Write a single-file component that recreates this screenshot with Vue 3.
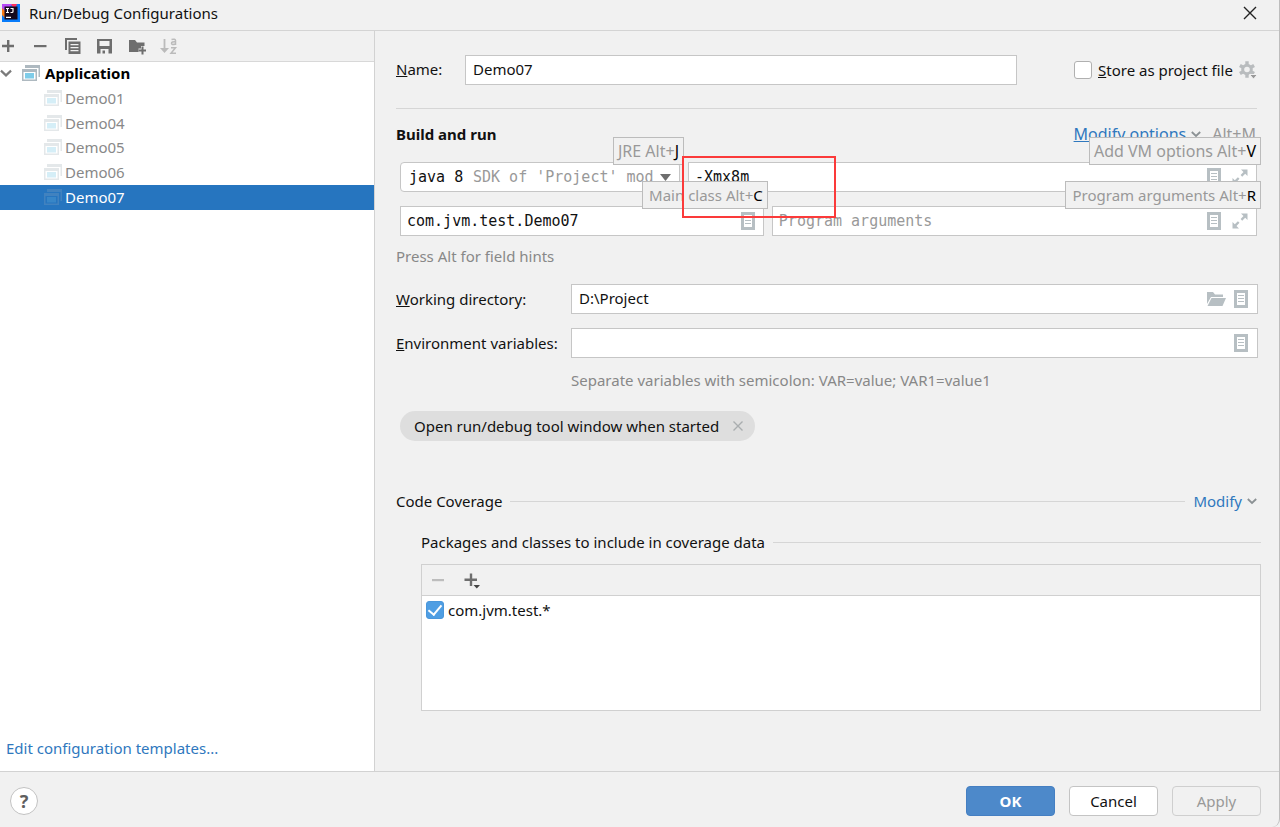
<script setup>
import { ref } from 'vue'

const configs = ['Demo01', 'Demo04', 'Demo05', 'Demo06', 'Demo07']
const selected = ref('Demo07')
const name = ref('Demo07')
const vmOptions = ref('-Xmx8m')
const mainClass = ref('com.jvm.test.Demo07')
const programArgs = ref('')
const workDir = ref('D:\\Project')
const envVars = ref('')
const store = ref(false)
const included = ref(true)
</script>

<template>
  <svg class="defs" aria-hidden="true">
    <symbol id="icon-doc" viewBox="0 0 16 18">
      <path fill="currentColor" fill-rule="evenodd" d="M1 0h14v18H1zM4 3v12h8V3z" />
      <path fill="currentColor" d="M5 5h6v1H5zM5 8h6v1H5zM5 11h6v1H5z" />
    </symbol>
    <symbol id="icon-expand" viewBox="0 0 16 16">
      <path fill="currentColor" d="M9 0.500h6.500V7L13.200 4.700 10.200 7.700 8.600 6.100 11.500 3.100zM.500 9l2.300 2.300L5.900 8.200 7.500 9.800 4.500 12.900 7 15.500H.500z" />
    </symbol>
    <symbol id="icon-app" viewBox="0 0 18 18">
      <path fill="#aeb9c0" d="M3 1h15v12h-1.500V4H3z" />
      <path fill="var(--pane)" d="M1 7h13v9H1z" />
      <path fill="#aeb9c0" fill-rule="evenodd" d="M0 5h15v12H0zM1.500 8v7.500h12V8z" />
      <path fill="#7fcce8" d="M3 9h9v5.500H3z" />
    </symbol>
    <symbol id="icon-chev" viewBox="0 0 10 10">
      <path fill="none" stroke="currentColor" stroke-width="1.800" d="M.8 3 5 7l4.200-4" />
    </symbol>
  </svg>
  <div class="dialog">
    <header class="titlebar">
      <svg class="logo" viewBox="0 0 18 18" aria-hidden="true">
        <path fill="#087cfa" d="M0 0h18v18H0z" />
        <path fill="#fe315d" d="M8 0h7l-2 5z" />
        <path fill="#f97a12" d="M0 3l5 2-2 9-3-3z" />
        <path fill="#b74af7" d="M0 0h10L4 8 0 4z" />
        <path fill="#150a1c" d="M2.500 2.500h13v13h-13z" />
        <path fill="none" stroke="#fff" stroke-width="1.200" d="M4 4.500h3M5.500 4.500v4M4 8.500h3M8.500 4.500H11v3q0 1-1 1H8.500M4 13.300h5" />
      </svg>
      <h1>Run/Debug Configurations</h1>
      <button class="plain close" aria-label="Close">
        <svg width="14" height="14" viewBox="0 0 14 14"><path d="M1 1l12 12M13 1 1 13" stroke="#222" stroke-width="1.400" /></svg>
      </button>
    </header>

    <div class="body">
      <aside class="side">
        <div class="tools">
          <button class="plain" aria-label="Add"><svg viewBox="0 0 18 18"><path fill="#6e6e6e" d="M7 3h2.400v4.800H14v2.400H9.400V15H7v-4.800H2V7.800h5z" /></svg></button>
          <button class="plain" aria-label="Remove"><svg viewBox="0 0 18 18"><path fill="#6e6e6e" d="M2 8h12.500v2.200H2z" /></svg></button>
          <button class="plain" aria-label="Copy"><svg viewBox="0 0 18 18"><path fill="#6e6e6e" d="M1 1h12v2H3v10H1z" /><path fill="#6e6e6e" fill-rule="evenodd" d="M4.500 4.500h12V17h-12zM6.500 7v1.200h8V7zM6.500 10v1.200h8V10zM6.500 13v1.200h8V13z" /></svg></button>
          <button class="plain" aria-label="Save"><svg viewBox="0 0 18 18"><path fill="#6e6e6e" fill-rule="evenodd" d="M1 2h15v14.500H1zM3.500 4v5h10V4zM4.500 12v4.500h8V12z" /><path fill="#6e6e6e" d="M6.500 13.500H9v3H6.500z" /></svg></button>
          <button class="plain" aria-label="New folder"><svg viewBox="0 0 18 18"><path fill="#6e6e6e" d="M1 3h6l2 2.500h7.500V9H13v2.500h-2.500V15H1z" /><path fill="#6e6e6e" d="M13.500 9.500h2v3h3v2h-3v3h-2v-3h-3v-2h3z" /></svg></button>
          <button class="plain sort" aria-label="Sort"><svg viewBox="0 0 18 18"><path fill="none" stroke="#bbb" stroke-width="1.800" d="M4.500 2v12" /><path fill="#bbb" d="M0 11h9l-4.500 5z" /><path fill="none" stroke="#bbb" stroke-width="1.500" d="M11.500 2.600q4-1 4 1V8M15.500 4.800q-4-.3-4 1.500 0 2 4 .7M11 10.800h4.500l-4.500 5.500h5" /></svg></button>
        </div>
        <ul class="tree">
          <li class="root">
            <svg class="twist" width="12" height="12"><use href="#icon-chev" /></svg>
            <svg class="appicon"><use href="#icon-app" /></svg>
            <span>Application</span>
          </li>
          <li v-for="c in configs" :key="c" :class="{ on: c === selected }" @click="selected = c">
            <svg class="appicon"><use href="#icon-app" /></svg>
            <span>{{ c }}</span>
          </li>
        </ul>
        <a class="link edit" href="#">Edit configuration templates...</a>
      </aside>

      <main class="main">
        <div class="namerow">
          <label class="namelabel" for="name"><u>N</u>ame:</label>
          <div class="field"><input id="name" v-model="name" type="text" /></div>
          <div class="store">
            <input id="store" v-model="store" class="check" type="checkbox" />
            <label for="store"><u>S</u>tore as project file</label>
            <svg class="gear" viewBox="0 0 18 18" aria-hidden="true">
              <path fill="none" stroke="#b9bcbe" stroke-width="3" d="M8 4.200a4.300 4.300 0 1 1 0 8.600 4.300 4.300 0 1 1 0-8.600z" />
              <path stroke="#b9bcbe" stroke-width="3.400" d="M8 .3v3.200M8 13.500v3.200M.9 4.400l2.800 1.600M12.300 11l2.800 1.600M.9 12.600 3.700 11M12.300 6l2.800-1.600" />
              <path fill="#999" stroke="#f2f2f2" d="M10.500 13.500h8L14.500 18z" />
            </svg>
          </div>
        </div>

        <hr class="rule" />

        <div class="buildhead">
          <h2>Build and run</h2>
          <a class="link" href="#"><u>Modify options</u></a>
          <svg class="chev" width="10" height="10"><use href="#icon-chev" /></svg>
          <span class="muted">Alt+M</span>
        </div>

        <div class="fields">
          <div class="row first">
            <div class="field mono jre">
              <select aria-label="JRE"><option>java 8</option></select>
              <span class="sdk">SDK of 'Project' mod</span>
              <svg class="arrow" viewBox="0 0 11 7" aria-hidden="true"><path fill="#6e6e6e" d="M0 0h11L5.500 7z" /></svg>
              <div class="tip">JRE Alt+<b>J</b></div>
            </div>
            <div class="field mono">
              <input v-model="vmOptions" type="text" aria-label="VM options" />
              <svg class="doc"><use href="#icon-doc" /></svg>
              <svg class="exp"><use href="#icon-expand" /></svg>
              <div class="tip">Add VM options Alt+<b>V</b></div>
            </div>
          </div>
          <div class="row second">
            <div class="field mono">
              <input v-model="mainClass" type="text" aria-label="Main class" />
              <svg class="doc"><use href="#icon-doc" /></svg>
              <div class="tip">Main class Alt+<b>C</b></div>
            </div>
            <div class="field mono">
              <input v-model="programArgs" type="text" placeholder="Program arguments" aria-label="Program arguments" />
              <svg class="doc"><use href="#icon-doc" /></svg>
              <svg class="exp"><use href="#icon-expand" /></svg>
              <div class="tip">Program arguments Alt+<b>R</b></div>
            </div>
          </div>
          <div class="mark"></div>
        </div>
        <p class="hint">Press Alt for field hints</p>

        <div class="form">
          <label for="wd"><u>W</u>orking directory:</label>
          <div class="field">
            <input id="wd" v-model="workDir" type="text" />
            <svg class="folder" viewBox="0 0 20 16" aria-hidden="true"><path fill="#b7bfc3" d="M1 1h6l2 2.500h8V6H5L1 13z" /><path fill="#b7bfc3" d="M5.500 7H20l-3.500 8H1.500z" /></svg>
            <svg class="doc"><use href="#icon-doc" /></svg>
          </div>
          <label for="env"><u>E</u>nvironment variables:</label>
          <div class="field">
            <input id="env" v-model="envVars" type="text" />
            <svg class="doc"><use href="#icon-doc" /></svg>
          </div>
        </div>
        <p class="hint envhint">Separate variables with semicolon: VAR=value; VAR1=value1</p>

        <div class="chip">
          <span>Open run/debug tool window when started</span>
          <button class="plain" aria-label="Remove option"><svg width="10" height="10" viewBox="0 0 10 10"><path d="M.5.5l9 9M9.500.5l-9 9" stroke="#a9adaf" stroke-width="1.400" /></svg></button>
        </div>

        <div class="section coverage">
          <h3>Code Coverage</h3>
          <span class="line"></span>
          <a class="link" href="#">Modify</a>
          <svg class="chev" width="10" height="10"><use href="#icon-chev" /></svg>
        </div>

        <div class="section packages">
          <h3>Packages and classes to include in coverage data</h3>
          <span class="line"></span>
        </div>
        <div class="list">
          <div class="listtools">
            <button class="plain" aria-label="Remove package" disabled><svg viewBox="0 0 18 18"><path fill="#bdbdbd" d="M3 8h12v2.200H3z" /></svg></button>
            <button class="plain" aria-label="Add package"><svg viewBox="0 0 18 18"><path fill="#6e6e6e" d="M7.800 2.500h2.400v5.100H15v2.400h-4.800v5H7.800v-5H2.500V7.600h5.300z" /><path fill="#444" d="M11.500 14H18l-3.200 3.500z" /></svg></button>
          </div>
          <div class="item">
            <input id="pkg" v-model="included" class="check" type="checkbox" />
            <label for="pkg">com.jvm.test.*</label>
          </div>
        </div>
      </main>
    </div>

    <footer class="footer">
      <button class="help" aria-label="Help">?</button>
      <button class="btn ok">OK</button>
      <button class="btn">Cancel</button>
      <button class="btn" disabled>Apply</button>
    </footer>
  </div>
</template>

<style>
body {
  background: #f1f1f1;
}
</style>

<style scoped>
* {
  box-sizing: border-box;
}
.defs {
  position: absolute;
  width: 0;
  height: 0;
}
.dialog {
  display: flex;
  flex-direction: column;
  min-height: 100vh;
  background: #f1f1f1;
  border-right: 1px solid #bdbdbd;
  border-radius: 0 0 8px 0;
  font: 15px/24px "Noto Sans", "Open Sans", sans-serif;
  color: #111;
}
h1, h2, h3, p, ul {
  margin: 0;
  padding: 0;
  font-size: inherit;
  font-weight: 400;
}
svg {
  display: block;
  flex: none;
}
input, select, button {
  font: inherit;
  color: inherit;
}
.plain {
  padding: 0;
  border: 0;
  background: none;
}
.link {
  color: #2f78be;
  text-decoration: none;
}
.titlebar {
  display: flex;
  align-items: center;
  height: 31px;
  padding: 0 22px 4px 2px;
  border-bottom: 1px solid #d4d4d4;
}
.logo {
  width: 18px;
  height: 18px;
  margin-right: 9px;
}
.close {
  margin-left: auto;
}
.body {
  display: flex;
  flex: 1;
}
.side {
  display: flex;
  flex-direction: column;
  flex: none;
  width: 375px;
  background: #fff;
  border-right: 1px solid #d2d2d2;
}
.tools {
  display: flex;
  align-items: center;
  gap: 14px;
  height: 31px;
  background: #f1f1f1;
  border-bottom: 1px solid #d8d8d8;
}
.tools svg, .listtools svg {
  width: 18px;
  height: 18px;
}
.tree {
  display: grid;
  grid-template-rows: repeat(6, 1fr);
  height: 148px;
  list-style: none;
  color: #888;
}
.tree li {
  display: flex;
  align-items: center;
  gap: 3px;
  min-height: 0;
  padding: 0 0 2px 44px;
}
.tree .root {
  padding-left: 0;
  gap: 5px;
  color: #000;
  font-weight: 700;
}
.twist {
  margin-right: 5px;
  color: #7b7b7b;
}
.appicon {
  --pane: #fff;
  width: 18px;
  height: 18px;
}
.tree li:not(.root) .appicon {
  opacity: 0.32;
}
.tree .on {
  background: #2675bf;
  color: #fff;
}
.tree li.on .appicon {
  --pane: transparent;
  opacity: 0.2;
}
.edit {
  margin: auto 6px 11px;
}
.main {
  flex: 1;
  min-width: 0;
  padding: 24px 18px 24px 21px;
}
.field {
  position: relative;
  display: flex;
  align-items: center;
  min-width: 0;
  height: 30px;
  border: 1px solid #c6c6c6;
  background: #fff;
}
.field input {
  flex: 1;
  min-width: 0;
  height: 28px;
  padding: 0 7px 2px;
  border: 0;
  outline: 0;
  background: transparent;
}
.field input::placeholder {
  color: #999;
  opacity: 1;
}
.mono {
  font-family: "DejaVu Sans Mono", monospace;
}
.mono input {
  padding: 0 6px;
}
.namerow {
  display: flex;
  align-items: center;
  margin-right: 4px;
}
.namelabel {
  width: 69px;
  padding-bottom: 2px;
}
.namerow .field {
  flex: 1;
}
.store {
  display: flex;
  align-items: center;
  width: 183px;
  margin-left: 57px;
  white-space: nowrap;
}
.check {
  appearance: none;
  flex: none;
  width: 18px;
  height: 18px;
  margin: 0 6px 0 0;
  border: 1px solid #b0b0b0;
  border-radius: 3px;
  background: #fff;
}
.check:checked {
  display: grid;
  place-items: center;
  border-color: #4a97db;
  background: #4f9ee3;
}
.check:checked::after {
  content: "";
  width: 6px;
  height: 11px;
  margin-bottom: 3px;
  border: solid #fff;
  border-width: 0 2px 2px 0;
  transform: rotate(40deg);
}
.gear {
  width: 18px;
  height: 18px;
  margin-left: auto;
}
.rule {
  height: 1px;
  margin: 23px 4px 13px 0;
  border: 0;
  background: #d6d6d6;
}
.buildhead {
  display: flex;
  align-items: center;
  margin-right: 5px;
  font-size: 16px;
}
.buildhead h2 {
  margin-right: auto;
  font-size: 15px;
  font-weight: 700;
}
.chev {
  margin-left: 5px;
  color: #8b9194;
}
.muted {
  margin-left: 11px;
  color: #999;
}
.fields {
  position: relative;
  margin: 16px 4px 0;
}
.row {
  display: grid;
  gap: 8px;
}
.first {
  grid-template-columns: 280px 1fr;
}
.second {
  grid-template-columns: 3fr 4fr;
  margin-top: 14px;
}
.jre {
  border-radius: 4px;
}
.jre select {
  width: 100%;
  height: 28px;
  padding: 0 8px;
  border: 0;
  outline: 0;
  appearance: none;
  background: transparent;
}
.sdk {
  position: absolute;
  left: 72px;
  color: #999;
  pointer-events: none;
  white-space: nowrap;
}
.arrow {
  position: absolute;
  right: 8px;
  width: 11px;
  height: 7px;
  pointer-events: none;
}
.doc {
  width: 16px;
  height: 18px;
  margin-right: 7px;
  color: #b7bfc3;
}
.exp {
  width: 16px;
  height: 16px;
  margin: 0 8px 0 3px;
  color: #b7bfc3;
}
.tip {
  position: absolute;
  top: -26px;
  right: -5px;
  z-index: 1;
  height: 28px;
  padding: 0 4px;
  border: 1px solid #bcbcbc;
  background: #f1f1f1;
  color: #999;
  font: 15px/26px "Noto Sans", "Open Sans", sans-serif;
  white-space: nowrap;
}
.first .tip {
  font-size: 16px;
}
.second .tip {
  padding-left: 6px;
}
.tip b {
  color: #000;
  font-weight: 400;
}
.mark {
  position: absolute;
  top: -6px;
  left: 282px;
  z-index: 2;
  width: 154px;
  height: 62px;
  border: 2px solid #fb3a3a;
  pointer-events: none;
}
.hint {
  margin-top: 8px;
  color: #888;
}
.form {
  display: grid;
  grid-template-columns: 175px 1fr;
  gap: 14px 0;
  align-items: center;
  margin: 16px 3px 0 0;
}
.folder {
  width: 20px;
  height: 16px;
  margin-right: 7px;
}
.form .doc {
  margin-right: 8px;
}
.envhint {
  margin: 10px 0 0 175px;
}
.chip {
  display: flex;
  align-items: center;
  gap: 14px;
  width: fit-content;
  height: 30px;
  margin: 19px 4px 48px;
  padding: 0 12px 0 14px;
  border-radius: 15px;
  background: #dedede;
}
.section {
  display: flex;
  align-items: center;
}
.line {
  flex: 1;
  height: 1px;
  margin: 0 8px;
  background: #d6d6d6;
}
.coverage {
  margin-right: 4px;
}
.packages {
  margin: 17px 0 10px 25px;
}
.packages .line {
  margin-right: 0;
}
.list {
  height: 147px;
  margin-left: 25px;
  border: 1px solid #d0d0d0;
  background: #fff;
}
.listtools {
  display: flex;
  align-items: center;
  gap: 15px;
  height: 31px;
  padding-left: 7px;
  border-bottom: 1px solid #d0d0d0;
  background: #f1f1f1;
}
.item {
  display: flex;
  align-items: center;
  padding: 2px 4px;
}
.item .check {
  margin-right: 4px;
}
.footer {
  display: flex;
  align-items: center;
  gap: 14px;
  height: 56px;
  padding: 3px 18px 0 10px;
  border-top: 1px solid #d2d2d2;
}
.help {
  width: 28px;
  height: 28px;
  margin-right: auto;
  padding: 0;
  border: 1px solid #c2c2c2;
  border-radius: 50%;
  background: #fff;
  color: #5f5f5f;
  font-size: 18px;
  font-weight: 700;
  line-height: 24px;
}
.btn {
  width: 89px;
  height: 30px;
  padding: 0;
  border: 1px solid #c4c4c4;
  border-radius: 4px;
  background: #fff;
}
.btn:disabled {
  border-color: #cfcfcf;
  background: #f1f1f1;
  color: #999;
}
.btn.ok {
  border-color: #457fc2;
  background: #4d89ca;
  color: #fff;
  font-weight: 700;
}
</style>
